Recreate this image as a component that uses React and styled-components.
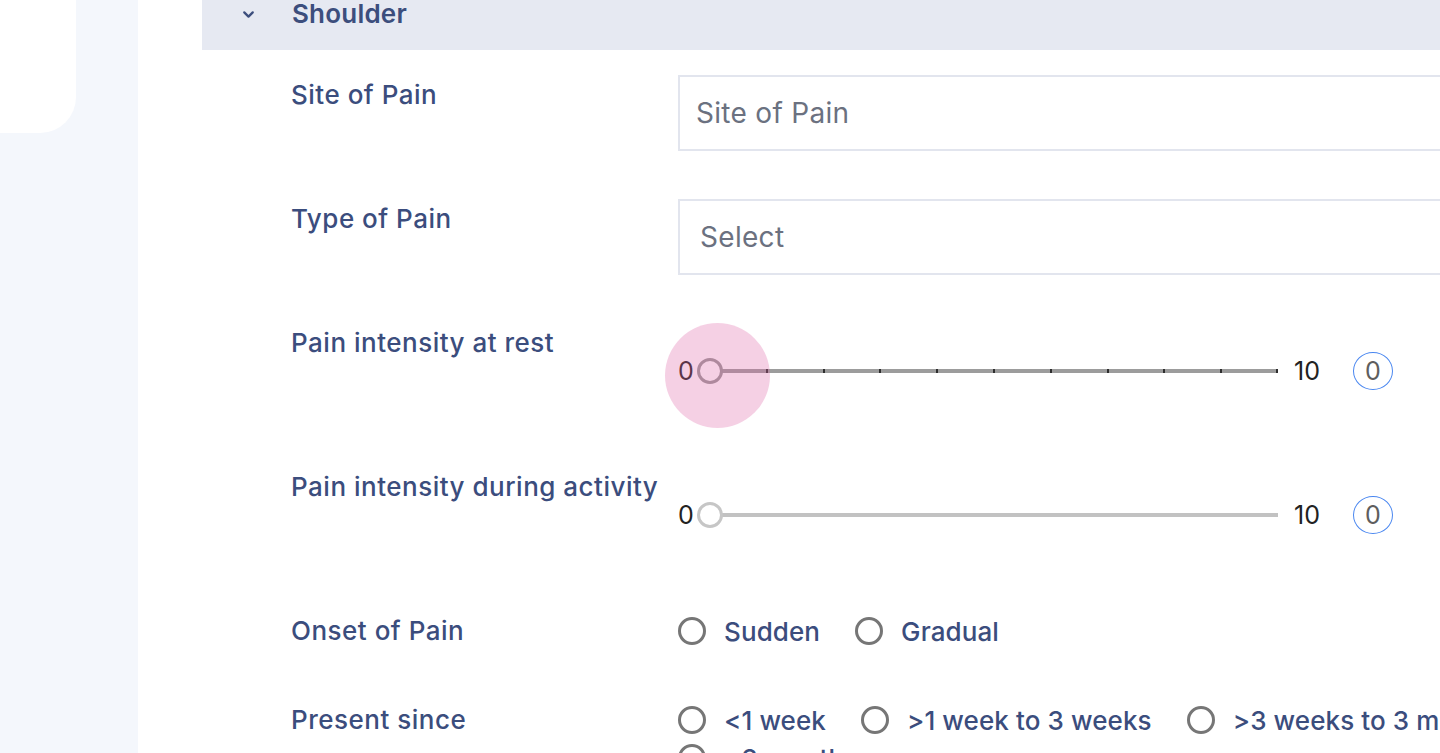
import React from "react";
import styled, { createGlobalStyle } from "styled-components";

const Global = createGlobalStyle`
  html, body { margin: 0; padding: 0; }
  body {
    font-family: Inter, "Open Sans", "Liberation Sans", sans-serif;
    background: #ffffff;
    overflow: hidden;
  }
  * { box-sizing: border-box; }
`;

const Page = styled.div`
  display: flex;
  width: 1440px;
  height: 753px;
  overflow: hidden;
`;

const Sidebar = styled.aside`
  width: 138px;
  flex-shrink: 0;
  background: #f4f7fc;
`;

const SideCard = styled.div`
  width: 76px;
  height: 133px;
  background: #ffffff;
  border-bottom-right-radius: 36px;
`;

const Main = styled.main`
  flex: 1;
  min-width: 0;
  background: #ffffff;
  padding-left: 64px;
  overflow: hidden;
`;

const SectionHeader = styled.div`
  height: 50px;
  background: #e6e9f2;
  display: flex;
  align-items: flex-start;
  padding-left: 38px;
  color: #3c4e7d;
`;

const Chevron = styled.svg`
  width: 17px;
  height: 17px;
  margin-top: 6px;
  flex-shrink: 0;
`;

const SectionTitle = styled.h2`
  margin: 0 0 0 35px;
  padding-top: 1px;
  font-size: 26px;
  font-weight: 600;
  line-height: 26px;
  letter-spacing: 0.2px;
`;

const Form = styled.div`
  display: flex;
  flex-direction: column;
  gap: 48px;
  padding: 25px 0 0 89px;
`;

const Row = styled.div`
  display: grid;
  grid-template-columns: 387px 1fr;
  min-height: ${(p) => p.$minHeight || 0}px;
`;

const Label = styled.label`
  padding-top: 5px;
  line-height: 30px;
  font-size: 26px;
  font-weight: 500;
  color: #3b4d7d;
  white-space: nowrap;
  letter-spacing: 0.5px;
`;

const TextBox = styled.div`
  width: 900px;
  height: 76px;
  border: 2px solid #e2e5ee;
  display: flex;
  align-items: center;
  padding-left: ${(p) => p.$pad}px;
  font-size: 28px;
  color: #6b7180;
  letter-spacing: 0.3px;
`;

const SliderField = styled.div`
  padding-top: 29px;
  height: 96px;
`;

const SliderLine = styled.div`
  position: relative;
  display: flex;
  align-items: center;
  height: 38px;
`;

const MinLabel = styled.span`
  width: 19px;
  font-size: 25px;
  color: #222222;
`;

const TrackArea = styled.div`
  position: relative;
  width: 594px;
  height: 38px;
  padding: 0 13px;
  display: flex;
  align-items: center;
`;

const Rail = styled.div`
  position: relative;
  width: 100%;
  height: 4px;
  background: ${(p) => (p.$marks ? "#9c9c9c" : "#c2c2c2")};
`;

const Tick = styled.span`
  position: absolute;
  top: 0;
  width: 2px;
  height: 4px;
  background: #2e2e2e;
`;

const Thumb = styled.span`
  position: absolute;
  left: 0;
  top: 50%;
  width: 26px;
  height: 26px;
  margin-top: -13px;
  border-radius: 50%;
  background: #ffffff;
  border: 3px solid ${(p) => (p.$marks ? "#9a9a9a" : "#c6c6c6")};
`;

const Halo = styled.span`
  position: absolute;
  left: -13px;
  top: 50%;
  width: 105px;
  height: 105px;
  margin-top: -48px;
  border-radius: 50%;
  background: rgba(222, 100, 165, 0.3);
  pointer-events: none;
`;

const MaxLabel = styled.span`
  margin-left: 3px;
  font-size: 25px;
  color: #222222;
`;

const ValueBubble = styled.span`
  margin-left: 33px;
  width: 40px;
  height: 38px;
  border-radius: 50%;
  border: 1.5px solid #4a87f0;
  display: flex;
  align-items: center;
  justify-content: center;
  font-size: 25px;
  color: #5e5e5e;
`;

const RadioGroup = styled.div`
  display: flex;
  flex-wrap: wrap;
  column-gap: 35px;
  padding-top: 1px;
  width: 880px;
`;

const Option = styled.label`
  display: flex;
  align-items: center;
  gap: 18px;
  height: 38px;
  font-size: 26px;
  font-weight: 500;
  color: #3b4d7d;
  white-space: nowrap;
  letter-spacing: 0.1px;
`;

const RadioCircle = styled.span`
  width: 28px;
  height: 28px;
  border-radius: 50%;
  border: 3px solid #767676;
  flex-shrink: 0;
`;

function Slider({ marks, focused }) {
  const ticks = [];
  if (marks) {
    for (let i = 1; i <= 10; i++) ticks.push(i);
  }
  return (
    <SliderField>
      <SliderLine>
        <MinLabel>0</MinLabel>
        <TrackArea>
          <Rail $marks={marks}>
            {ticks.map((i) => (
              <Tick key={i} style={{ left: `calc(${i * 10}% - ${i === 10 ? 2 : 1}px)` }} />
            ))}
          </Rail>
          <Thumb $marks={marks} />
        </TrackArea>
        <MaxLabel>10</MaxLabel>
        <ValueBubble>0</ValueBubble>
        {focused && <Halo />}
      </SliderLine>
    </SliderField>
  );
}

function Radios({ options }) {
  return (
    <RadioGroup>
      {options.map((o) => (
        <Option key={o}>
          <RadioCircle />
          {o}
        </Option>
      ))}
    </RadioGroup>
  );
}

export default function App() {
  return (
    <>
      <Global />
      <Page>
        <Sidebar>
          <SideCard />
        </Sidebar>
        <Main>
          <SectionHeader>
            <Chevron viewBox="0 0 24 24" fill="none" stroke="currentColor" strokeWidth="3.2" strokeLinecap="round" strokeLinejoin="round">
              <path d="M6 9l6 6 6-6" />
            </Chevron>
            <SectionTitle>Shoulder</SectionTitle>
          </SectionHeader>
          <Form>
            <Row>
              <Label>Site of Pain</Label>
              <TextBox $pad={16}>Site of Pain</TextBox>
            </Row>
            <Row>
              <Label>Type of Pain</Label>
              <TextBox $pad={20}>Select</TextBox>
            </Row>
            <Row>
              <Label>Pain intensity at rest</Label>
              <Slider marks focused />
            </Row>
            <Row>
              <Label>Pain intensity during activity</Label>
              <Slider />
            </Row>
            <Row $minHeight={41}>
              <Label>Onset of Pain</Label>
              <Radios options={["Sudden", "Gradual"]} />
            </Row>
            <Row>
              <Label>Present since</Label>
              <Radios options={["<1 week", ">1 week to 3 weeks", ">3 weeks to 3 months", ">3 months"]} />
            </Row>
          </Form>
        </Main>
      </Page>
    </>
  );
}
